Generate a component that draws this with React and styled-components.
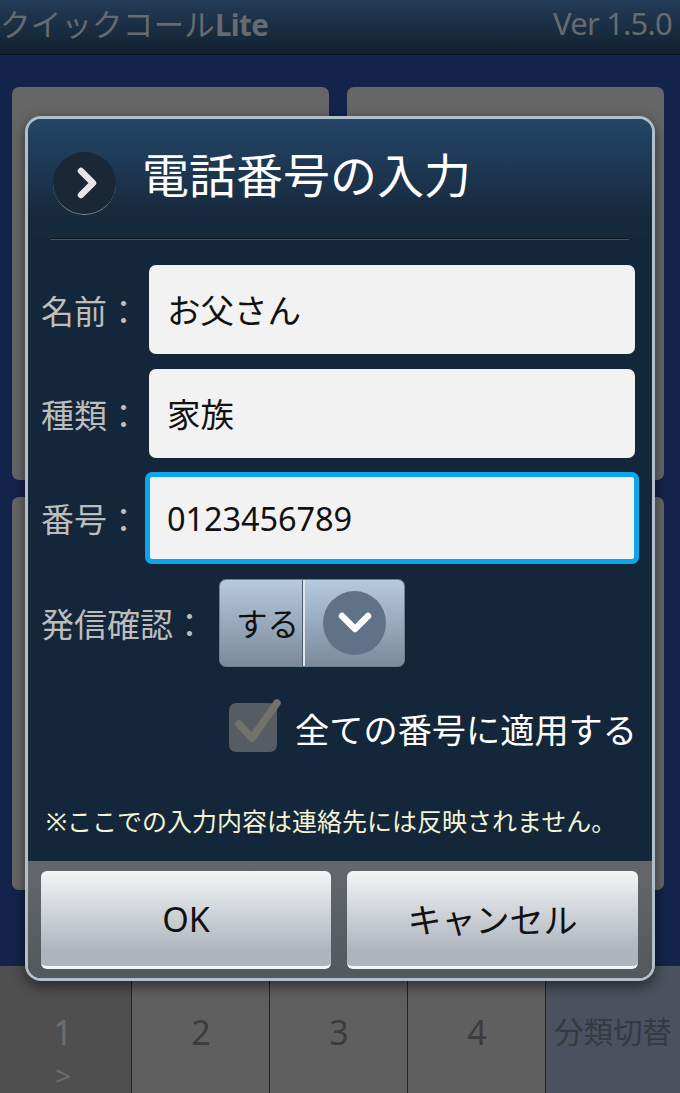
import React from 'react';
import styled, { createGlobalStyle } from 'styled-components';

const FONT = '"Noto Sans", "Noto Sans CJK JP", sans-serif';

const Global = createGlobalStyle`
  html, body { margin: 0; padding: 0; background: #14234b; }
  * { box-sizing: border-box; }
`;

const Screen = styled.div`
  position: relative;
  width: 680px;
  height: 1093px;
  overflow: hidden;
  display: flex;
  flex-direction: column;
  background: #14234b;
  font-family: ${FONT};
`;

const AppBar = styled.header`
  height: 55px;
  flex: none;
  display: flex;
  align-items: center;
  justify-content: space-between;
  padding: 0 8px 8px 0;
  background: linear-gradient(#223c57, #12202f);
  border-bottom: 1px solid #0b121b;
  color: #666b70;
`;

const AppTitle = styled.span`
  font-size: 30.5px;
  font-weight: 400;
  letter-spacing: 0.2px;
  b { font-weight: 700; font-size: 29.5px; letter-spacing: -0.6px; }
`;

const Version = styled.span`
  font-size: 31px;
  letter-spacing: -0.8px;
`;

const CardGrid = styled.div`
  flex: 1;
  display: grid;
  grid-template-columns: 317px 317px;
  grid-template-rows: 393px 393px;
  column-gap: 18px;
  row-gap: 17px;
  padding: 32px 16px 0 12px;
`;

const Card = styled.div`
  background: #666666;
  border-radius: 7px;
`;

const TabBar = styled.nav`
  height: 127px;
  flex: none;
  display: grid;
  grid-template-columns: 131px 137px 137px 137px 1fr;
  column-gap: 1px;
  background: #14234b;
`;

const Tab = styled.div`
  display: flex;
  flex-direction: column;
  align-items: center;
  padding: 44px ${({ $shift }) => $shift || 0}px 0 0;
  font-size: 34px;
  line-height: 44px;
  letter-spacing: -1px;
  color: ${({ $dim }) => ($dim ? '#6f6e6f' : '#3c3c3c')};
  background: ${({ $bg }) => $bg || '#5f5f5f'};
`;

const TabLabel = styled.span`
  font-size: 29.5px;
  letter-spacing: 0;
  color: #343a42;
  white-space: nowrap;
`;

const TabMark = styled.span`
  font-size: 28px;
  line-height: 30px;
  margin-top: 6px;
`;

const Dialog = styled.section`
  position: absolute;
  left: 25px;
  top: 116px;
  width: 630px;
  height: 865px;
  display: flex;
  flex-direction: column;
  border: 3px solid #b0bfcb;
  border-radius: 16px;
  overflow: hidden;
  box-shadow: 0 5px 14px rgba(0, 0, 0, 0.5);
  background: #142639;
`;

const DialogHead = styled.div`
  height: 119px;
  flex: none;
  display: flex;
  align-items: center;
  gap: 26px;
  padding: 0 0 0 25px;
  background: linear-gradient(#244668, #16283b 85%);
`;

const Badge = styled.div`
  width: 63px;
  height: 63px;
  margin-top: 9px;
  padding-left: 4px;
  flex: none;
  display: flex;
  align-items: center;
  justify-content: center;
  border-radius: 50%;
  background: #1a2735;
  border-bottom: 1px solid #7d8c99;
`;

const DialogTitle = styled.h1`
  margin: 0 0 8px;
  font-size: 47px;
  font-weight: 400;
  color: #fff;
  line-height: 60px;
`;

const Divider = styled.div`
  height: 2px;
  flex: none;
  margin: 0 23px 0 22px;
  background: linear-gradient(#0d1722 50%, #3f5467 50%);
`;

const Form = styled.div`
  flex: 1;
  display: flex;
  flex-direction: column;
  padding: 25px 17px 0 13px;
  background: #142639;
`;

const Row = styled.div`
  display: flex;
  align-items: center;
  height: 89px;
  margin-bottom: 15px;
`;

const Label = styled.label`
  width: 108px;
  flex: none;
  font-size: 33px;
  color: #bdbdbd;
  white-space: pre;
`;

const Field = styled.div`
  flex: 1;
  height: 89px;
  display: flex;
  align-items: center;
  padding: 0 0 2px 18px;
  background: #f2f2f2;
  border-radius: 7px;
  color: #111;
  font-size: 33.5px;
  white-space: nowrap;
`;

const FocusField = styled(Field)`
  flex: none;
  width: 494px;
  height: 92px;
  margin: 0 -4px;
  padding: 2px 0 0 17px;
  border: 5px solid #0aa6ee;
  border-radius: 7px;
  font-size: 32.5px;
  letter-spacing: -0.1px;
`;

const ConfirmRow = styled(Row)`
  margin: 2px 0 0;
  height: 88px;
`;

const ConfirmLabel = styled(Label)`
  width: auto;
  margin-right: 13px;
`;

const Select = styled.div`
  width: 186px;
  height: 88px;
  display: flex;
  border-radius: 7px;
  border: 1px solid #6f8092;
  background: linear-gradient(#b5c9e0, #7b8a9b);
  color: #111;
`;

const SelectValue = styled.div`
  width: 85px;
  display: flex;
  align-items: center;
  justify-content: center;
  padding: 0 0 2px 12px;
  font-size: 31.5px;
  white-space: nowrap;
  border-right: 2px solid #dfe6ed;
  box-shadow: inset -1px 0 0 #4c5a69;
`;

const SelectArrow = styled.div`
  flex: 1;
  display: flex;
  align-items: center;
  justify-content: center;
`;

const ArrowDisc = styled.div`
  width: 63px;
  height: 64px;
  display: flex;
  align-items: center;
  justify-content: center;
  border-radius: 50%;
  background: #5f7288;
`;

const CheckRow = styled.div`
  display: flex;
  justify-content: flex-end;
  align-items: center;
  gap: 18px;
  margin-top: 33px;
  margin-right: -2px;
  height: 56px;
`;

const CheckBox = styled.div`
  position: relative;
  width: 48px;
  height: 49px;
  margin-top: -2px;
  border-radius: 7px;
  background: #565c62;
`;

const CheckMark = styled.svg`
  position: absolute;
  left: 3px;
  top: -5px;
`;

const CheckText = styled.span`
  font-size: 34.2px;
  color: #fff;
  white-space: nowrap;
`;

const Note = styled.p`
  margin: 48px 0 0 5px;
  font-size: 25px;
  line-height: 34px;
  color: #f3f3d6;
  white-space: nowrap;
`;

const DialogFoot = styled.div`
  height: 117px;
  flex: none;
  display: grid;
  grid-template-columns: 290px 291px;
  grid-template-rows: 98px;
  column-gap: 16px;
  padding: 10px 14px 0 13px;
  background: linear-gradient(#64686c, #53585c);
`;

const FootButton = styled.button`
  padding: 0;
  border: 0;
  border-radius: 6px;
  border-bottom: 3px solid #f2f4f6;
  background: linear-gradient(#f4f5f6, #adb4bb 85%);
  font-family: ${FONT};
  font-size: 34px;
  color: #111;
`;

export default function App() {
  return (
    <Screen>
      <Global />
      <AppBar>
        <AppTitle>クイックコール<b>Lite</b></AppTitle>
        <Version>Ver 1.5.0</Version>
      </AppBar>
      <CardGrid>
        <Card />
        <Card />
        <Card />
        <Card />
      </CardGrid>
      <TabBar>
        <Tab $dim $bg="#504f50" $shift={6}>
          1
          <TabMark>&gt;</TabMark>
        </Tab>
        <Tab>2</Tab>
        <Tab>3</Tab>
        <Tab>4</Tab>
        <Tab $bg="#49525e">
          <TabLabel>分類切替</TabLabel>
        </Tab>
      </TabBar>
      <Dialog>
        <DialogHead>
          <Badge>
            <svg width="26" height="34" viewBox="0 0 26 34">
              <path d="M7 5 L19 17 L7 29" fill="none" stroke="#e6e6e6" strokeWidth="6.5" strokeLinecap="round" strokeLinejoin="round" />
            </svg>
          </Badge>
          <DialogTitle>電話番号の入力</DialogTitle>
        </DialogHead>
        <Divider />
        <Form>
          <Row>
            <Label>名前：</Label>
            <Field>お父さん</Field>
          </Row>
          <Row>
            <Label>種類：</Label>
            <Field>家族</Field>
          </Row>
          <Row>
            <Label>番号：</Label>
            <FocusField>0123456789</FocusField>
          </Row>
          <ConfirmRow>
            <ConfirmLabel>発信確認：</ConfirmLabel>
            <Select>
              <SelectValue>する</SelectValue>
              <SelectArrow>
                <ArrowDisc>
                  <svg width="36" height="26" viewBox="0 0 36 26">
                    <path d="M5 6 L18 19 L31 6" fill="none" stroke="#fff" strokeWidth="6.5" strokeLinecap="round" strokeLinejoin="round" />
                  </svg>
                </ArrowDisc>
              </SelectArrow>
            </Select>
          </ConfirmRow>
          <CheckRow>
            <CheckBox>
              <CheckMark width="54" height="50" viewBox="0 0 54 50">
                <path d="M7 26 L20 40 L45 5" fill="none" stroke="#73716c" strokeWidth="7.5" strokeLinecap="round" strokeLinejoin="round" />
              </CheckMark>
            </CheckBox>
            <CheckText>全ての番号に適用する</CheckText>
          </CheckRow>
          <Note>※ここでの入力内容は連絡先には反映されません。</Note>
        </Form>
        <DialogFoot>
          <FootButton>OK</FootButton>
          <FootButton>キャンセル</FootButton>
        </DialogFoot>
      </Dialog>
    </Screen>
  );
}
